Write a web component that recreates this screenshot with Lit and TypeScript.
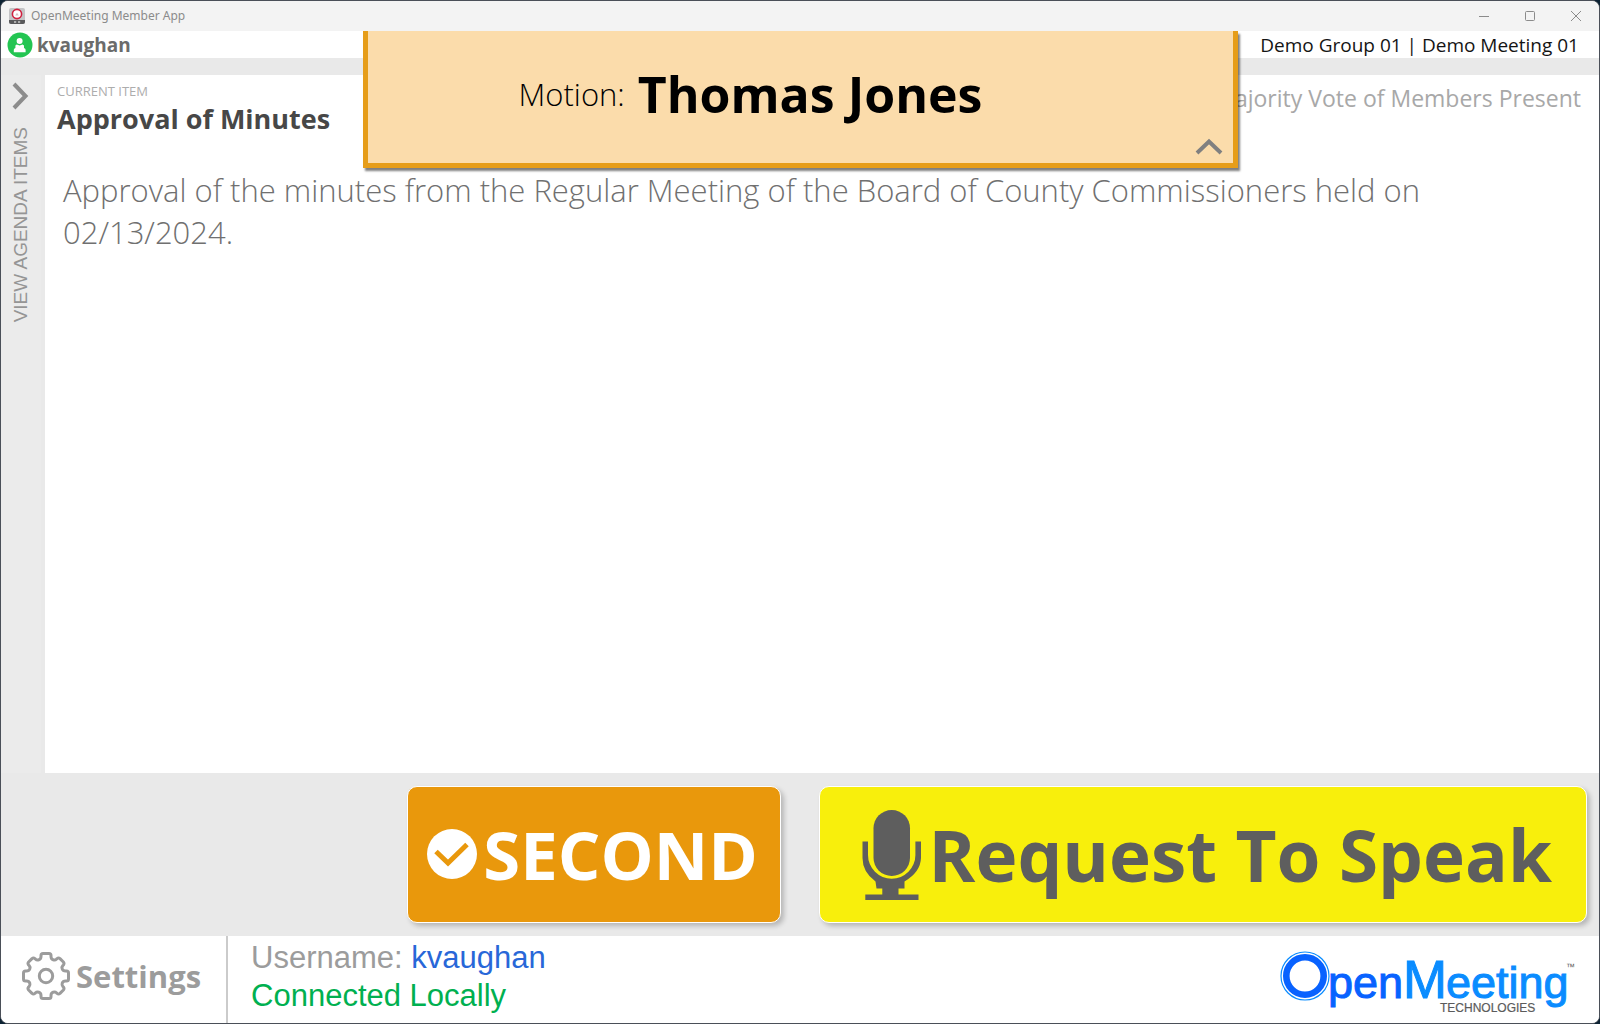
import { LitElement, html, css, svg } from "lit";
import { customElement, property } from "lit/decorators.js";

const appIcon = svg`
  <svg class="app-icon" viewBox="0 0 16 16" aria-hidden="true">
    <rect width="16" height="16" rx="2" fill="#c4c4c6" />
    <path d="M0 12h16v2a2 2 0 0 1-2 2H2a2 2 0 0 1-2-2z" fill="#59595b" />
    <circle cx="8" cy="6" r="4.6" fill="#fff" stroke="#d0203f" stroke-width="1.6" />
    <path d="M6.2 7.600h3.600L8 4.800z" fill="#d9bcc2" />
    <path d="M5 14h2.200M9 14h2.200" stroke="#c8c8c8" stroke-width="1.600" />
  </svg>`;

const userIcon = svg`
  <svg class="user-icon" viewBox="0 0 26 26" aria-hidden="true">
    <circle cx="13" cy="13" r="12.5" fill="#23c552" />
    <circle cx="12.6" cy="9" r="3" fill="#fff" />
    <path d="M9.6 12.6q3 1.6 6 0l1.4.9v2.4q1.6.5 1.6 1.8v2.6H6.8v-2.6q0-1.3 1.6-1.8v-2.4z" fill="#fff" />
  </svg>`;

const gearIcon = svg`
  <svg class="gear-icon" viewBox="-25 -25 50 50" fill="none" stroke="#9c9c9c" stroke-width="3" stroke-linejoin="round" aria-hidden="true">
    <circle r="6.7" />
    <path d="M-5-19.5V-20.5Q-5-22.5-3-22.5H3Q5-22.5 5-20.5V-19.5Q5-17 7.2-16.2Q9.2-15.6 10.4-16.8L11-17.4Q12.6-18.6 14-17.4L17.4-14Q18.6-12.6 17.4-11L16.8-10.4Q15.6-9.2 16.2-7.2Q17-5 19.5-5H20.5Q22.5-5 22.5-3V3Q22.5 5 20.5 5H19.5Q17 5 16.2 7.2Q15.6 9.2 16.8 10.4L17.4 11Q18.6 12.6 17.4 14L14 17.4Q12.6 18.6 11 17.4L10.4 16.8Q9.2 15.6 7.2 16.2Q5 17 5 19.5V20.5Q5 22.5 3 22.5H-3Q-5 22.5-5 20.5V19.5Q-5 17-7.2 16.2Q-9.2 15.6-10.4 16.8L-11 17.4Q-12.6 18.6-14 17.4L-17.4 14Q-18.6 12.6-17.4 11L-16.8 10.4Q-15.6 9.2-16.2 7.2Q-17 5-19.5 5H-20.5Q-22.5 5-22.5 3V-3Q-22.5-5-20.5-5H-19.5Q-17-5-16.2-7.2Q-15.6-9.2-16.8-10.4L-17.4-11Q-18.6-12.6-17.4-14L-14-17.4Q-12.6-18.6-11-17.4L-10.4-16.8Q-9.2-15.6-7.2-16.2Q-5-17-5-19.5Z" />
  </svg>`;

const checkIcon = svg`
  <svg class="check-icon" viewBox="0 0 50 50" aria-hidden="true">
    <circle cx="25" cy="25" r="25" fill="#fff" />
    <path d="M9 22.5 21 34 40 15.5" fill="none" stroke="#e9980c" stroke-width="5" />
  </svg>`;

const micIcon = svg`
  <svg class="mic-icon" viewBox="0 0 60 90" fill="#5e5e5e" aria-hidden="true">
    <rect x="11.5" y="0" width="36.5" height="66" rx="18.2" />
    <path d="M.5 31.500H6V45a23.700 23.700 0 0 0 47.400 0V31.500H59V48Q58.500 62 42.500 71.500V78.500H36.500V84.500H56.500V90H3.300V84.500H20.300V78.500H14.500L13.500 71.500Q.5 62 .5 48Z" />
  </svg>`;

const logo = svg`
  <svg class="logo" viewBox="0 0 296 66" role="img" aria-label="OpenMeeting Technologies">
    <circle cx="25" cy="25" r="24" fill="none" stroke="#0a8cff" stroke-width="1.2" />
    <circle cx="25" cy="25" r="18.700" fill="none" stroke="#0862ff" stroke-width="6.600" />
    <text class="logo-text" y="47" font-size="45">
      <tspan x="48" fill="#0862ff" stroke="#0862ff">pen</tspan><tspan x="123" font-size="53" fill="#0a8cff" stroke="#0a8cff">M</tspan><tspan x="166" fill="#0a8cff" stroke="#0a8cff">eeting</tspan>
    </text>
    <text x="160" y="61" class="logo-text" font-size="12" fill="#5b5b5b" stroke="#5b5b5b" stroke-width="0.2">TECHNOLOGIES</text>
    <text x="286" y="19" class="logo-text" font-size="9" fill="#5b5b5b">™</text>
  </svg>`;

@customElement("title-bar")
export class TitleBar extends LitElement {
  @property() title = "";

  static styles = css`
    :host {
      display: flex;
      align-items: center;
      box-sizing: border-box;
      height: 30px;
      padding: 0 3px 1px 8px;
      gap: 6px;
      background: #f3f3f3;
      color: #8b8b8b;
      font: 12px/18px "Noto Sans", sans-serif;
    }
    .app-icon { width: 16px; height: 16px; }
    .name { flex: 1; }
    .window-button {
      width: 40px;
      height: 28px;
      padding: 0;
      border: 0;
      background: none;
      color: #8b8b8b;
    }
    .glyph { display: block; width: 12px; height: 12px; margin: 0 auto; }
  `;

  private control(label: string, path: string) {
    return html`<button class="window-button" aria-label=${label}>
      <svg class="glyph" viewBox="0 0 12 12" fill="none" stroke="currentColor"><path d=${path} /></svg>
    </button>`;
  }

  render() {
    return html`
      ${appIcon}
      <span class="name">${this.title}</span>
      ${this.control("Minimize", "M1 6.500H11")}
      ${this.control("Maximize", "M2.500 1.500H9.500Q10.500 1.500 10.500 2.500V9.500Q10.500 10.500 9.500 10.500H2.500Q1.500 10.500 1.500 9.500V2.500Q1.500 1.500 2.500 1.500Z")}
      ${this.control("Close", "M1 1 11 11M11 1 1 11")}
    `;
  }
}

@customElement("motion-banner")
export class MotionBanner extends LitElement {
  @property() mover = "";

  static styles = css`
    :host {
      display: flex;
      flex-direction: column;
      box-sizing: border-box;
      height: 137px;
      border: 5px solid #e69d19;
      border-top: 0;
      background: #fbdcab;
      box-shadow: 2px 3px 2px 0 rgba(0, 0, 0, 0.5);
      color: #000;
    }
    .motion {
      flex: 1;
      display: flex;
      align-items: center;
      justify-content: center;
      gap: 13px;
      margin: 0;
      padding: 1px 100px 0 0;
      white-space: nowrap;
    }
    .label { font-size: 31px; font-weight: 300; line-height: 40px; }
    .mover { font-size: 50px; font-weight: 700; line-height: 60px; }
    .collapse {
      align-self: flex-end;
      width: 28px;
      height: 18px;
      margin: -18px 10px 8px;
      padding: 0;
      border: 0;
      background: none;
    }
    .chevron { display: block; }
  `;

  render() {
    return html`
      <p class="motion"><span class="label">Motion:</span><strong class="mover">${this.mover}</strong></p>
      <button class="collapse" aria-label="Collapse">
        <svg class="chevron" width="28" height="18" viewBox="0 0 28 18" fill="none" stroke="#808080" stroke-width="4"><path d="M2 16 14 4.500 26 16" /></svg>
      </button>
    `;
  }
}

@customElement("app-root")
export class AppRoot extends LitElement {
  static styles = css`
    :host {
      display: block;
      background: #0c2233;
      font-family: "Open Sans", "Noto Sans", sans-serif;
    }
    .window {
      position: relative;
      display: flex;
      flex-direction: column;
      box-sizing: border-box;
      min-height: 100vh;
      border: 1px solid #4a4f58;
      border-radius: 8px;
      overflow: hidden;
      background: #e9e9e9;
    }
    .user-bar {
      display: flex;
      align-items: center;
      justify-content: space-between;
      height: 27px;
      margin-bottom: 17px;
      padding: 0 20px 0 6px;
      background: #fff;
      font-size: 19px;
      line-height: 27px;
    }
    .user {
      display: flex;
      align-items: center;
      gap: 4px;
      color: #6b6b6b;
      font-weight: 700;
    }
    .user-icon { width: 26px; height: 26px; }
    .user-name, .meeting { padding-top: 1px; }
    .meeting { color: #141414; }
    .banner {
      position: absolute;
      top: 30px;
      left: 362px;
      right: 361px;
    }
    .main { flex: 1; display: flex; }
    .agenda-toggle {
      display: flex;
      flex-direction: column;
      align-items: center;
      gap: 17px;
      width: 40px;
      margin-right: 4px;
      padding: 7px 0 0;
      border: 0;
      background: #ebebeb;
      color: #959595;
      font: 19px/22px "Liberation Sans", sans-serif;
    }
    .toggle-label {
      writing-mode: vertical-rl;
      transform: rotate(180deg);
    }
    .item {
      flex: 1;
      padding: 8px 18px 20px 12px;
      background: #fff;
    }
    .item-head { display: flex; justify-content: space-between; }
    .eyebrow {
      margin: 0;
      color: #adadad;
      font-size: 13px;
      line-height: 16px;
    }
    .item-title {
      margin: 0;
      color: #474747;
      font-size: 27px;
      font-weight: 700;
      line-height: 40px;
    }
    .rule {
      margin: 0;
      color: #a8a8a8;
      font-size: 23px;
      line-height: 30px;
    }
    .description {
      margin: 30px 0 0;
      padding: 0 6px;
      color: #707070;
      font-size: 31px;
      font-weight: 300;
      line-height: 42px;
    }
    .actions {
      display: grid;
      grid-template-columns: 356fr 374fr 769fr;
      gap: 38px;
      padding: 13px 12px;
    }
    .action {
      display: flex;
      align-items: center;
      justify-content: center;
      height: 137px;
      padding: 0;
      border: 1px solid #fff;
      border-radius: 10px;
      box-shadow: 3px 3px 5px rgba(0, 0, 0, 0.22);
      font-family: inherit;
      font-weight: 700;
      white-space: nowrap;
    }
    .second {
      grid-column: 2;
      gap: 6px;
      padding: 0 2px 1px 0;
      background: #e9980c;
      color: #fff;
      font-size: 67px;
    }
    .speak {
      gap: 7px;
      padding-left: 8px;
      background: #f8ef0c;
      color: #5e5e5e;
      font-size: 71px;
    }
    .check-icon { width: 50px; height: 50px; }
    .mic-icon { width: 60px; height: 90px; }
    .footer {
      display: flex;
      align-items: stretch;
      height: 87px;
      background: #fff;
    }
    .settings {
      display: flex;
      align-items: center;
      gap: 5px;
      padding: 0 25px 8px 20px;
      border: 0;
      border-right: 2px solid #cbcbcb;
      background: none;
      color: #9c9c9c;
      font: 700 31px/40px "Open Sans", "Noto Sans", sans-serif;
    }
    .gear-icon { width: 50px; height: 50px; }
    .status {
      flex: 1;
      padding: 3px 23px;
      color: #9c9c9c;
      font: 31px/38px "Liberation Sans", sans-serif;
    }
    .line { margin: 0; }
    .username { color: #2867d8; }
    .connected { color: #00b050; }
    .logo {
      width: 296px;
      height: 66px;
      margin: 15px 23px 0 0;
    }
    .logo-text { font-family: "Liberation Sans", sans-serif; }
  `;

  render() {
    return html`
      <div class="window">
        <title-bar title="OpenMeeting Member App"></title-bar>
        <header class="user-bar">
          <span class="user">${userIcon}<span class="user-name">kvaughan</span></span>
          <span class="meeting">Demo Group 01 | Demo Meeting 01</span>
        </header>
        <motion-banner class="banner" mover="Thomas Jones"></motion-banner>
        <main class="main">
          <button class="agenda-toggle">
            <svg width="18" height="28" viewBox="0 0 18 28" fill="none" stroke="#8c8c8c" stroke-width="4" aria-hidden="true"><path d="M2 2 13.500 14 2 26" /></svg>
            <span class="toggle-label">VIEW AGENDA ITEMS</span>
          </button>
          <section class="item">
            <div class="item-head">
              <div>
                <p class="eyebrow">CURRENT ITEM</p>
                <h1 class="item-title">Approval of Minutes</h1>
              </div>
              <p class="rule">Majority Vote of Members Present</p>
            </div>
            <p class="description">
              Approval of the minutes from the Regular Meeting of the Board of County Commissioners held on 02/13/2024.
            </p>
          </section>
        </main>
        <div class="actions">
          <button class="action second">${checkIcon}SECOND</button>
          <button class="action speak">${micIcon}Request To Speak</button>
        </div>
        <footer class="footer">
          <button class="settings">${gearIcon}Settings</button>
          <div class="status">
            <p class="line">Username: <span class="username">kvaughan</span></p>
            <p class="line connected">Connected Locally</p>
          </div>
          ${logo}
        </footer>
      </div>
    `;
  }
}
